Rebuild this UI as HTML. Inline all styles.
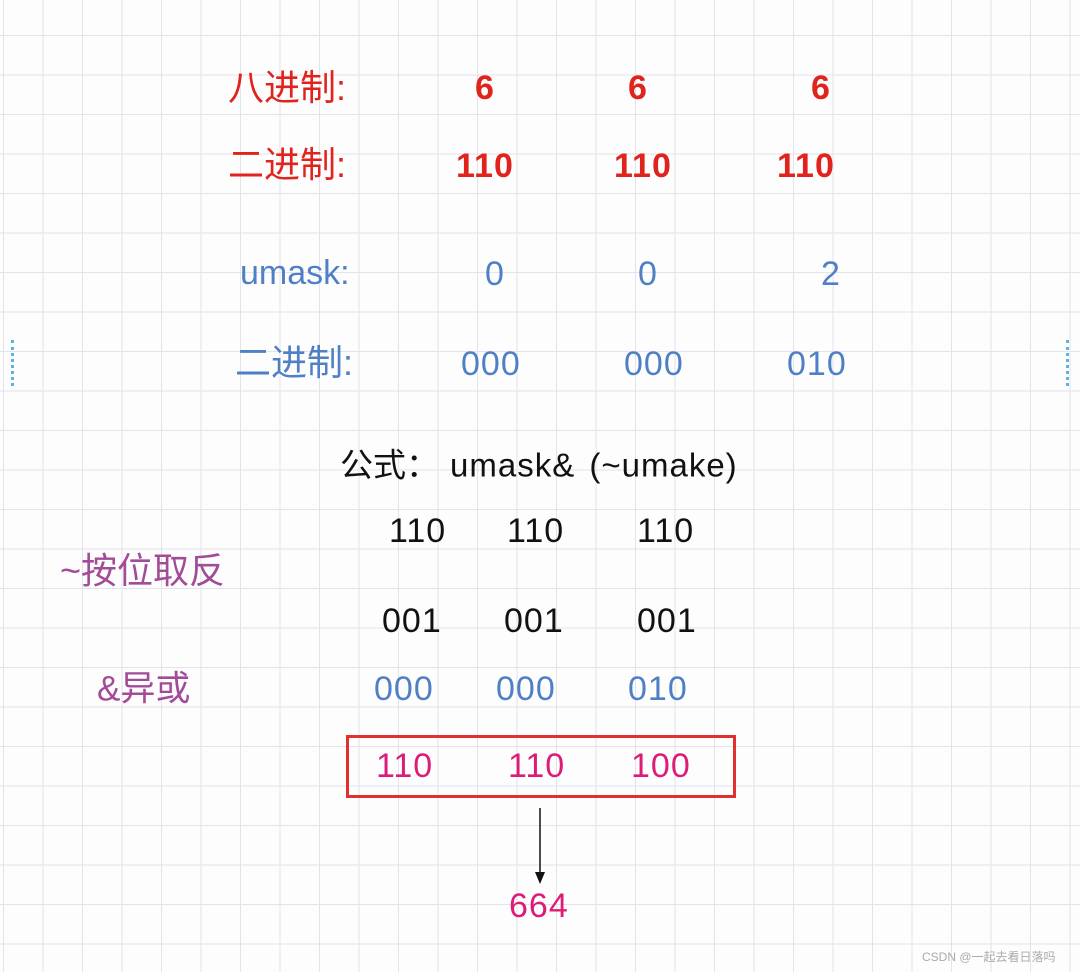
<!DOCTYPE html>
<html><head><meta charset="utf-8"><style>
html,body{margin:0;padding:0}
body{width:1080px;height:972px;position:relative;overflow:hidden;background-color:#fdfdfe;
background-image:linear-gradient(to right,#e3e4ea 1px,transparent 1px),linear-gradient(to bottom,#e3e4ea 1px,transparent 1px);
background-size:39.5px 39.5px;background-position:3px -4.5px;
font-family:"Liberation Sans","Noto Sans CJK SC",sans-serif}
.t{position:absolute;white-space:nowrap;line-height:1;transform:translateY(-50%)}
.r{color:#e0231c;font-weight:bold;font-size:34px;letter-spacing:1px}
.rc{color:#e0231c;font-size:36px}
.b{color:#4f7fc4;font-size:34px;letter-spacing:1px}
.k{color:#111;font-size:34px;letter-spacing:1px}
.p{color:#a24c98;font-size:36px}
.m{color:#dd1c78;font-size:34px;letter-spacing:1px}
.dot{position:absolute;width:3px;border-left:3px dotted #5ab4e0}
</style></head><body>
<div class="dot" style="left:11px;top:340px;height:46px"></div>
<div class="dot" style="left:1066px;top:340px;height:46px"></div>
<div class="t rc" style="left:228px;top:88px">八进制:</div>
<div class="t r" style="left:475px;top:88px">6</div>
<div class="t r" style="left:628px;top:88px">6</div>
<div class="t r" style="left:811px;top:88px">6</div>
<div class="t rc" style="left:228px;top:165px">二进制:</div>
<div class="t r" style="left:456px;top:166px">110</div>
<div class="t r" style="left:614px;top:166px">110</div>
<div class="t r" style="left:777px;top:166px">110</div>

<div class="t b" style="left:240px;top:273px;letter-spacing:0">umask:</div>
<div class="t b" style="left:485px;top:274px">0</div>
<div class="t b" style="left:638px;top:274px">0</div>
<div class="t b" style="left:821px;top:274px">2</div>
<div class="t b" style="left:235px;top:363px;font-size:36px;letter-spacing:0">二进制:</div>
<div class="t b" style="left:461px;top:364px">000</div>
<div class="t b" style="left:624px;top:364px">000</div>
<div class="t b" style="left:787px;top:364px">010</div>

<div class="t k" style="left:340px;top:465px;font-size:33px;letter-spacing:0"><span>公式：</span><span style="position:absolute;left:110px;letter-spacing:1px;word-spacing:4px">umask&amp; (~umake)</span></div>
<div class="t k" style="left:389px;top:531px">110</div>
<div class="t k" style="left:507px;top:531px">110</div>
<div class="t k" style="left:637px;top:531px">110</div>
<div class="t p" style="left:60px;top:571px">~按位取反</div>
<div class="t k" style="left:382px;top:621px">001</div>
<div class="t k" style="left:504px;top:621px">001</div>
<div class="t k" style="left:637px;top:621px">001</div>
<div class="t p" style="left:97px;top:689px;font-size:35px">&amp;异或</div>
<div class="t b" style="left:374px;top:689px">000</div>
<div class="t b" style="left:496px;top:689px">000</div>
<div class="t b" style="left:628px;top:689px">010</div>

<div style="position:absolute;left:346px;top:735px;width:384px;height:57px;border:3px solid #e03030"></div>
<div class="t m" style="left:376px;top:766px">110</div>
<div class="t m" style="left:508px;top:766px">110</div>
<div class="t m" style="left:631px;top:766px">100</div>
<svg style="position:absolute;left:530px;top:808px" width="20" height="78"><line x1="10" y1="0" x2="10" y2="66" stroke="#111" stroke-width="1.5"/><path d="M5 64 L10 76 L15 64 Z" fill="#111"/></svg>
<div class="t m" style="left:509px;top:906px">664</div>
<div class="t" style="left:922px;top:957px;font-size:12px;color:#aaa">CSDN @一起去看日落吗</div>
</body></html>
